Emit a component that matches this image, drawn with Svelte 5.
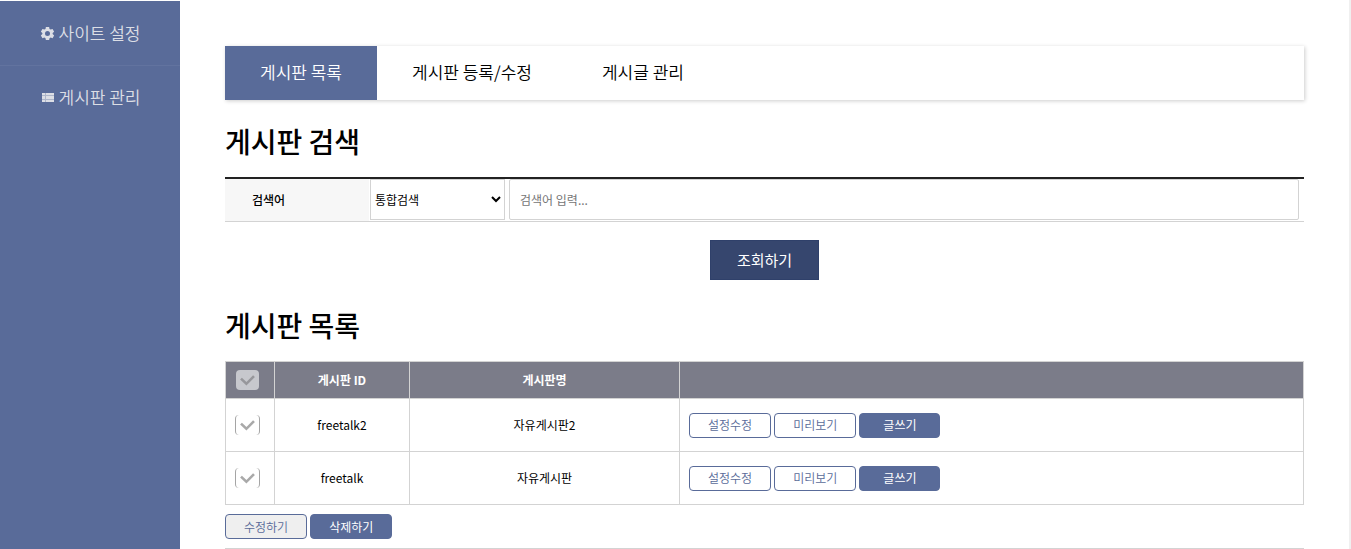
<script>
  const tabs = ['게시판 목록', '게시판 등록/수정', '게시글 관리'];
  const boards = [
    { id: 'freetalk2', name: '자유게시판2' },
    { id: 'freetalk', name: '자유게시판' }
  ];
  let active = $state(0);
  let selected = $state([false, false]);
  let allSelected = $derived(selected.every(Boolean));

  function toggleAll(event) {
    selected = boards.map(() => event.currentTarget.checked);
  }
</script>

{#snippet tick()}
  <svg class="tick" viewBox="0 0 15 11" width="15" height="11" aria-hidden="true">
    <path d="M1 3.6 6.4 8.8 14 1.2" fill="none" stroke="currentColor" stroke-width="2.6" />
  </svg>
{/snippet}

<div class="page">
  <nav class="side">
    <a href="#site">
      <svg viewBox="0 0 24 24" width="15" height="15" aria-hidden="true">
        <path fill="currentColor" fill-rule="evenodd" d="M9.4 1.5h5.2l.6 3.2 1.8 1 3.1-1.1 2.5 4.5-2.4 2.1v1.7l2.4 2.1-2.5 4.5-3.1-1.1-1.8 1-.6 3.1H9.4l-.6-3.1-1.8-1-3.1 1.1L1.4 15l2.4-2.1v-1.7L1.4 9.1l2.5-4.5L7 5.7l1.8-1zM12 8a4 4 0 1 0 0 8 4 4 0 0 0 0-8z" />
      </svg>
      <span>사이트 설정</span>
    </a>
    <a href="#board">
      <svg viewBox="0 0 15 15" width="15" height="15" aria-hidden="true">
        <path fill="currentColor" opacity="0.65" d="M2 3h12v9H2z" />
        <path fill="currentColor" d="M2 3h3v2H2zM6 3h8v2H6zM2 6h3v3H2zM6 6h8v3H6zM2 10h3v2H2zM6 10h8v2H6z" />
      </svg>
      <span>게시판 관리</span>
    </a>
  </nav>

  <main>
    <nav class="tabs">
      {#each tabs as tab, i}
        <a href="#tab{i}" class:on={active === i} onclick={() => (active = i)}>{tab}</a>
      {/each}
    </nav>

    <h1>게시판 검색</h1>
    <form onsubmit={(e) => e.preventDefault()}>
      <div class="search">
        <label for="keyword">검색어</label>
        <div class="fields">
          <select aria-label="검색 조건">
            <option>통합검색</option>
            <option>게시판 ID</option>
            <option>게시판명</option>
          </select>
          <input id="keyword" type="text" placeholder="검색어 입력..." />
        </div>
      </div>
      <button class="submit" type="submit">조회하기</button>
    </form>

    <h1>게시판 목록</h1>
    <table>
      <colgroup>
        <col class="c-check" /><col class="c-id" /><col class="c-name" /><col />
      </colgroup>
      <thead>
        <tr>
          <th>
            <label class="check all">
              <input type="checkbox" aria-label="전체 선택" checked={allSelected} onchange={toggleAll} />
              {@render tick()}
            </label>
          </th>
          <th>게시판 ID</th>
          <th>게시판명</th>
          <th></th>
        </tr>
      </thead>
      <tbody>
        {#each boards as board, i}
          <tr>
            <td>
              <label class="check">
                <input type="checkbox" aria-label={board.id} bind:checked={selected[i]} />
                {@render tick()}
              </label>
            </td>
            <td>{board.id}</td>
            <td>{board.name}</td>
            <td>
              <div class="actions">
                <a class="btn" href="#edit-{board.id}">설정수정</a>
                <a class="btn" href="#view-{board.id}">미리보기</a>
                <a class="btn fill" href="#write-{board.id}">글쓰기</a>
              </div>
            </td>
          </tr>
        {/each}
      </tbody>
    </table>
    <div class="bottom">
      <button class="btn grey" type="button">수정하기</button>
      <button class="btn fill" type="button">삭제하기</button>
    </div>
  </main>
</div>

<style>
  :global(body) {
    background: #fff;
  }
  .page, .page * { box-sizing: border-box; }
  .page {
    display: flex;
    min-height: 100vh;
    padding-top: 1px;
    border-right: 2px solid #f0f0f0;
    color: #000;
    font: 400 12px/20px "Noto Sans CJK KR", sans-serif;
  }
  a { text-decoration: none; }
  button, input, select { font: inherit; }

  .side {
    flex: 0 0 180px;
    background: #596b99;
  }
  .side a {
    display: flex;
    align-items: center;
    justify-content: center;
    gap: 4px;
    height: 64px;
    color: #dcdee5;
    font-size: 17px;
    font-weight: 350;
  }
  .side a + a {
    height: 63px;
    border-top: 1px solid #62739f;
  }

  main {
    flex: 1;
    min-width: 0;
    padding: 45px 45px 0;
  }
  .tabs {
    display: flex;
    height: 54px;
    box-shadow: 1px 1px 4px rgba(0, 0, 0, 0.2);
  }
  .tabs a {
    padding: 0 35px;
    color: #000;
    font-size: 17px;
    font-weight: 350;
    line-height: 52px;
  }
  .tabs a.on {
    background: #596b99;
    color: #fff;
  }
  h1 {
    margin: 21px 0 16px;
    font-size: 28px;
    font-weight: 500;
    line-height: 40px;
  }

  .search {
    display: flex;
    border-top: 2px solid #222;
    border-bottom: 1px solid #d3d3d3;
  }
  .search label {
    flex: 0 0 144px;
    padding-left: 27px;
    background: #f7f7f7;
    font-weight: 500;
    line-height: 42px;
  }
  .fields {
    flex: 1;
    display: flex;
    gap: 4px;
    padding: 0 5px 1px 1px;
  }
  select {
    width: 135px;
    height: 41px;
    padding: 0;
    border: 1px solid #d3d3d3;
    border-radius: 0;
    background-color: #fff;
    color: #000;
  }
  .fields input {
    flex: 1;
    min-width: 0;
    height: 41px;
    padding: 0 10px;
    border: 1px solid #d3d3d3;
    border-radius: 2px;
  }
  .fields input::placeholder { color: #757575; }
  .submit {
    display: block;
    height: 40px;
    margin: 18px auto 25px;
    padding: 0 26px;
    border: 1px solid #2f406a;
    background: #36466e;
    color: #fff;
    font-size: 15px;
  }

  table {
    width: 100%;
    border-collapse: collapse;
    table-layout: fixed;
  }
  .c-check { width: 49px; }
  .c-id { width: 135px; }
  .c-name { width: 270px; }
  th, td {
    height: 53px;
    padding: 0 9px;
    border: 1px solid #d3d3d3;
    text-align: center;
  }
  th {
    height: 37px;
    background: #7b7c89;
    color: #fff;
    font-weight: 700;
  }
  th:first-child, td:first-child { padding: 0; }

  .check {
    display: grid;
    place-items: center;
    width: 25px;
    height: 20px;
    margin-left: 9px;
    border: solid #a5a5a5;
    border-width: 0 1px;
    border-radius: 4px;
    color: #a9a9a9;
  }
  .check.all {
    width: 23px;
    margin-left: 10px;
    border: 0;
    background: #c7c8cd;
    color: #97979b;
  }
  .check input, .check .tick { grid-area: 1 / 1; }
  .check input {
    appearance: none;
    width: 100%;
    height: 100%;
    margin: 0;
  }
  .check .tick { pointer-events: none; }
  .check:has(:checked) .tick { color: #596b99; }

  .actions, .bottom {
    display: flex;
    gap: 3px;
  }
  .bottom {
    padding: 9px 0;
    border-bottom: 1px solid #d3d3d3;
  }
  .btn {
    height: 25px;
    padding: 0 18px;
    border: 1px solid #596b99;
    border-radius: 4px;
    background: #fff;
    color: #596b99;
    font-weight: 350;
    line-height: 21px;
  }
  .btn.fill {
    background: #596b99;
    color: #fff;
    font-weight: 400;
  }
  .actions .fill { padding: 0 23px; }
  .btn.grey { background: #efefef; }
</style>
